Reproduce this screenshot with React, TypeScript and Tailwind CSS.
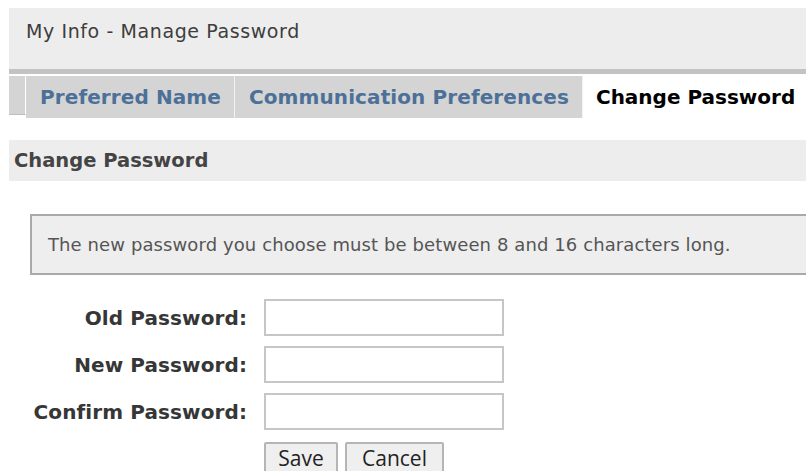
import React from 'react';

type Field = {
    label: string;
    name: string;
}

const FIELDS: Field[] = [
    {label: 'Old Password:', name: 'oldPassword'},
    {label: 'New Password:', name: 'newPassword'},
    {label: 'Confirm Password:', name: 'confirmPassword'},
];

const TABS = ['Preferred Name', 'Communication Preferences'];

const PasswordRow = ({label, name}: Field) => (
    <div className="flex items-center h-[47px]">
        <label htmlFor={name}
               className="w-[247px] text-right text-[20px] font-bold text-[#363636] tracking-[0.1px]">
            {label}
        </label>
        <input id={name} type="password"
               className="ml-[17px] w-[240px] h-[37px] border-2 border-[#c6c6c6] bg-white outline-none"/>
    </div>
)

const App = () => {
    return (
        <div className="w-[806px] h-[471px] overflow-hidden bg-white font-['DejaVu_Sans',sans-serif]">
            {/* page title bar */}
            <div className="ml-[9px] mt-[8px] h-[61px] bg-[#ededed] pl-[17px] pt-[9px] text-[19px] tracking-[0.6px] text-[#3d3d3d]">
                My Info - Manage Password
            </div>
            <div className="ml-[9px] h-[5px] bg-[#c3c3c3]"/>

            {/* tabs */}
            <div className="ml-[9px] mt-[2px] flex h-[42px]">
                <div className="w-[17px] h-[39px] bg-[#d4d4d4] border-r border-white border-b border-b-[#bdbdbd]"/>
                {TABS.map((tab) => (
                    <div key={tab}
                         className="flex items-center h-[42px] pl-[14px] pr-[13px] bg-[#d4d4d4] border-r border-[#f2f2f2] whitespace-nowrap text-[20px] font-bold tracking-[0.1px] text-[#4d7098]">
                        {tab}
                    </div>
                ))}
                <div className="flex-1 flex items-center pl-[13px] bg-white whitespace-nowrap text-[20px] font-bold text-black">
                    Change Password
                </div>
            </div>

            {/* section heading */}
            <div className="ml-[9px] mt-[22px] h-[41px] bg-[#ededed] pl-[5px] flex items-center text-[19.5px] font-bold text-[#444]">
                Change Password
            </div>

            {/* hint box */}
            <div className="ml-[30px] mt-[33px] w-[800px] h-[61px] border-2 border-[#a9a9a9] bg-[#eeeeee] flex items-center pl-[16px] text-[18px] tracking-[0.1px] text-[#555]">
                The new password you choose must be between 8 and 16 characters long.
            </div>

            {/* form */}
            <form className="mt-[19px]">
                {FIELDS.map((f) => <PasswordRow key={f.name} {...f}/>)}
                <div className="ml-[264px] mt-[7px] flex gap-[7px] font-['Open_Sans',sans-serif] text-[21px] text-[#222]">
                    <button type="button"
                            className="w-[74px] h-[38px] flex items-start justify-center leading-[28px] border-2 border-[#b5b5b5] rounded-[2px] bg-[#efefef]">
                        Save
                    </button>
                    <button type="button"
                            className="w-[99px] h-[38px] flex items-start justify-center leading-[28px] border-2 border-[#b5b5b5] rounded-[2px] bg-[#efefef]">
                        Cancel
                    </button>
                </div>
            </form>
        </div>
    )
}

export default App;
